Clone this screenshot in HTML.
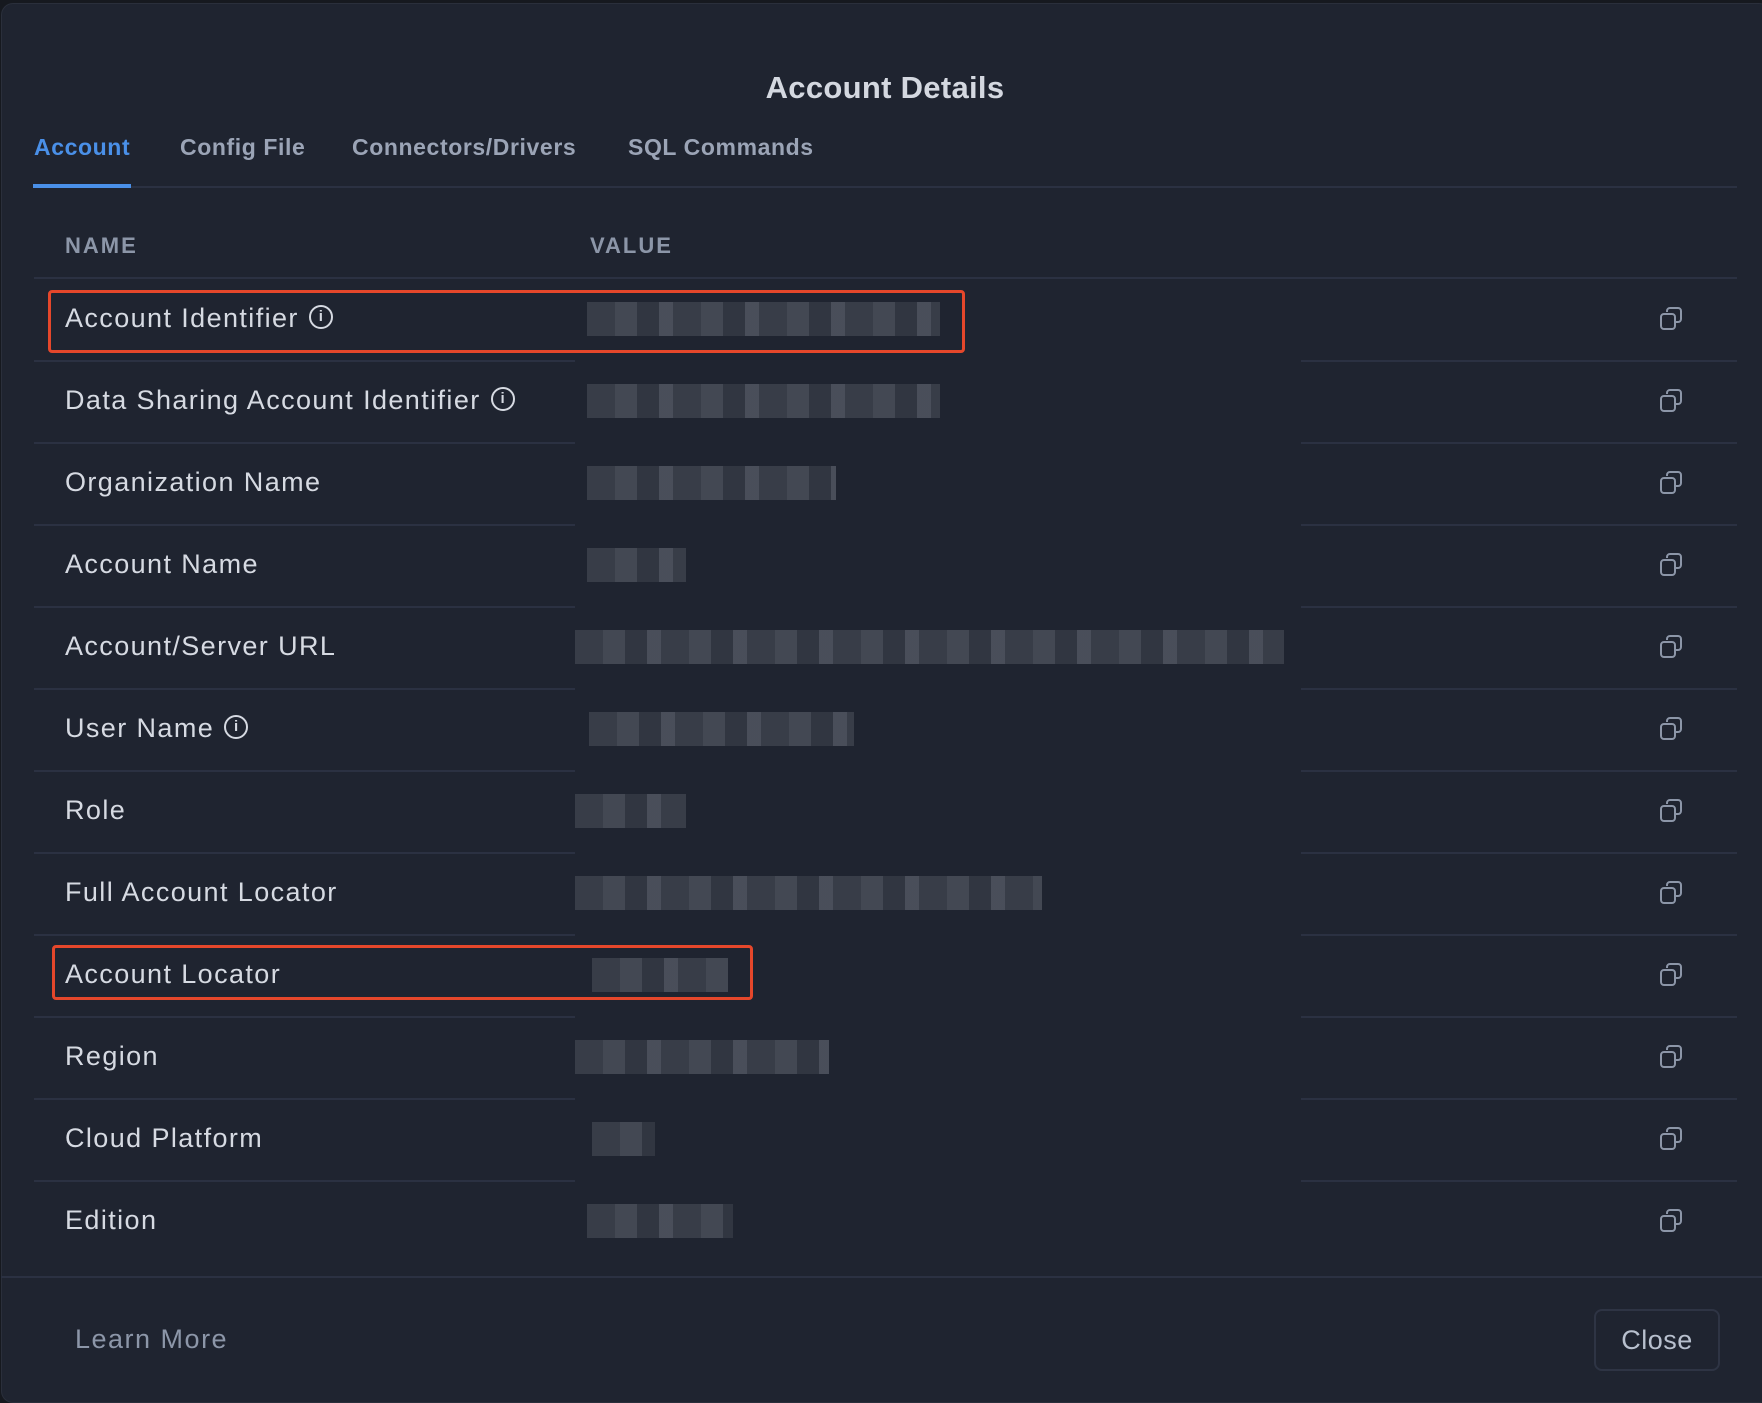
<!DOCTYPE html>
<html><head><meta charset="utf-8"><style>
*{margin:0;padding:0;box-sizing:border-box}
body{width:1762px;height:1396px;background:#16191f;font-family:"Liberation Sans",sans-serif;position:relative;overflow:hidden}
.dlg{position:absolute;left:1px;top:3px;width:1770px;height:1400px;background:#1f2430;border-radius:12px;border:1px solid #2a2f3b}
.abs{position:absolute}
.title{left:0;width:1770px;top:70px;text-align:center;font-size:31px;font-weight:bold;color:#d4d8e0;letter-spacing:0.3px}
.tab{top:134px;font-size:23px;font-weight:bold;color:#9ba4b6;letter-spacing:0.6px}
.line{height:2px;background:#2b3142}
.hdr{top:233px;font-size:22px;font-weight:bold;color:#8c96a8;letter-spacing:2px}
.name{left:65px;font-size:27px;color:#d6dae2;line-height:30px;letter-spacing:1.4px}
.info{display:inline-block;width:24px;height:24px;border:2px solid #d6dae2;border-radius:50%;vertical-align:middle;margin-left:10px;position:relative;top:-3px;font-size:15px;text-align:center;line-height:20px;font-weight:bold;letter-spacing:0}
.val{height:34px;background:repeating-linear-gradient(90deg,#3b404b 0 28px,#474c57 28px 50px,#333843 50px 72px,#4e535e 72px 86px);opacity:.9}
.red{border:3px solid #e5472b;border-radius:4px}
</style></head><body>
<div class="dlg"></div>
<div class="abs title">Account Details</div>
<div class="abs tab" style="left:34px;color:#4a90e8">Account</div>
<div class="abs tab" style="left:180px">Config File</div>
<div class="abs tab" style="left:352px">Connectors/Drivers</div>
<div class="abs tab" style="left:628px">SQL Commands</div>
<div class="abs line" style="left:34px;top:186px;width:1703px"></div>
<div class="abs" style="left:33px;top:184px;width:98px;height:4px;background:#4a90e8"></div>
<div class="abs hdr" style="left:65px">NAME</div>
<div class="abs hdr" style="left:590px">VALUE</div>
<div class="abs line" style="left:34px;top:277px;width:1703px"></div>

<div id="rows"></div>
<script>
var names=['Account Identifier|i','Data Sharing Account Identifier|i','Organization Name','Account Name','Account/Server URL','User Name|i','Role','Full Account Locator','Account Locator','Region','Cloud Platform','Edition'];
var vx=[[587,940],[587,940],[587,836],[587,686],[575,1284],[589,854],[575,686],[575,1042],[592,728],[575,829],[592,655],[587,733]];
var h='';
for(var i=0;i<12;i++){var c=319+82*i;var p=names[i].split('|');
h+='<div class="abs name" style="top:'+(c-16)+'px">'+p[0]+(p[1]?'<span class="info">i</span>':'')+'</div>';
h+='<div class="abs val" style="left:'+vx[i][0]+'px;top:'+(c-17)+'px;width:'+(vx[i][1]-vx[i][0])+'px"></div>';
h+='<svg class="abs" style="left:1658px;top:'+(c-13)+'px" width="26" height="26" viewBox="0 0 26 26" fill="none" stroke="#8c96a8" stroke-width="2"><path d="M9 6V5a3 3 0 0 1 3-3h8a3 3 0 0 1 3 3v8a3 3 0 0 1-3 3h-2"/><rect x="3" y="8" width="14" height="15" rx="3"/></svg>';
if(i<11){h+='<div class="abs line" style="left:34px;top:'+(c+41)+'px;width:541px"></div><div class="abs line" style="left:1301px;top:'+(c+41)+'px;width:436px"></div>';}
}
document.getElementById('rows').innerHTML=h;
</script>
<div class="abs red" style="left:48px;top:290px;width:917px;height:63px"></div>
<div class="abs red" style="left:52px;top:945px;width:701px;height:55px"></div>
<div class="abs line" style="left:1px;top:1276px;width:1761px;height:2px"></div>
<div class="abs" style="left:75px;top:1324px;font-size:27px;color:#8c96a8;letter-spacing:1.5px">Learn More</div>
<div class="abs" style="left:1594px;top:1309px;width:126px;height:62px;border:2px solid #2e3444;border-radius:8px;font-size:27px;color:#b8c0ce;text-align:center;line-height:58px;letter-spacing:0.5px">Close</div>
</body></html>
